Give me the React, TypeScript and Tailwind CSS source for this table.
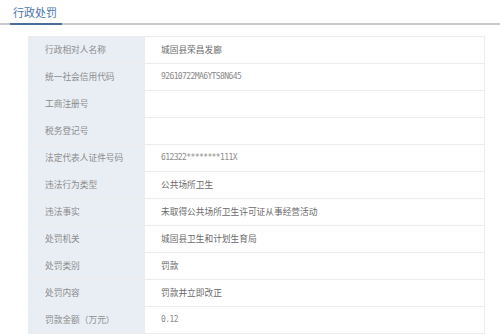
import React from 'react';

const rows: { label: string; value: string; mono?: boolean }[] = [
  { label: '行政相对人名称', value: '城固县荣昌发廊' },
  { label: '统一社会信用代码', value: '92610722MA6YTS8N645', mono: true },
  { label: '工商注册号', value: '' },
  { label: '税务登记号', value: '' },
  { label: '法定代表人证件号码', value: '612322********111X', mono: true },
  { label: '违法行为类型', value: '公共场所卫生' },
  { label: '违法事实', value: '未取得公共场所卫生许可证从事经营活动' },
  { label: '处罚机关', value: '城固县卫生和计划生育局' },
  { label: '处罚类别', value: '罚款' },
  { label: '处罚内容', value: '罚款并立即改正' },
  { label: '罚款金额（万元）', value: '0.12', mono: true },
];

const App: React.FC = () => {
  return (
    <div className="w-[500px] h-[335px] overflow-hidden bg-white font-['Noto_Sans_CJK_SC',sans-serif]">
      {/* section header */}
      <div className="relative h-[25px] border-b-2 border-[#cacaca]">
        <span className="absolute left-[13px] top-[5px] text-[11px] leading-[14px] text-[#4a76aa]">
          行政处罚
        </span>
        <div className="absolute left-[10px] bottom-[-2px] w-[52px] h-[2px] bg-[#4a6f9a]" />
      </div>

      {/* detail table */}
      <div className="ml-[28px] mt-[11px] w-[457px] border-t border-r border-[#ececec]">
        {rows.map((row) => (
          <div key={row.label} className="flex h-[27px] border-b border-[#ececec]">
            <div className="w-[117px] shrink-0 bg-[#e9eef4] pl-[17px] flex items-center text-[8.7px] text-[#8c8c8c]">
              {row.label}
            </div>
            <div
              className={
                row.mono
                  ? "flex-1 pl-[16px] flex items-center font-['DejaVu_Sans_Mono',monospace] text-[8px] tracking-[-0.6px] text-[#8a8a8a]"
                  : 'flex-1 pl-[16px] flex items-center text-[8.7px] text-[#6a6a6a]'
              }
            >
              {row.value}
            </div>
          </div>
        ))}
      </div>
    </div>
  );
};

export default App;
